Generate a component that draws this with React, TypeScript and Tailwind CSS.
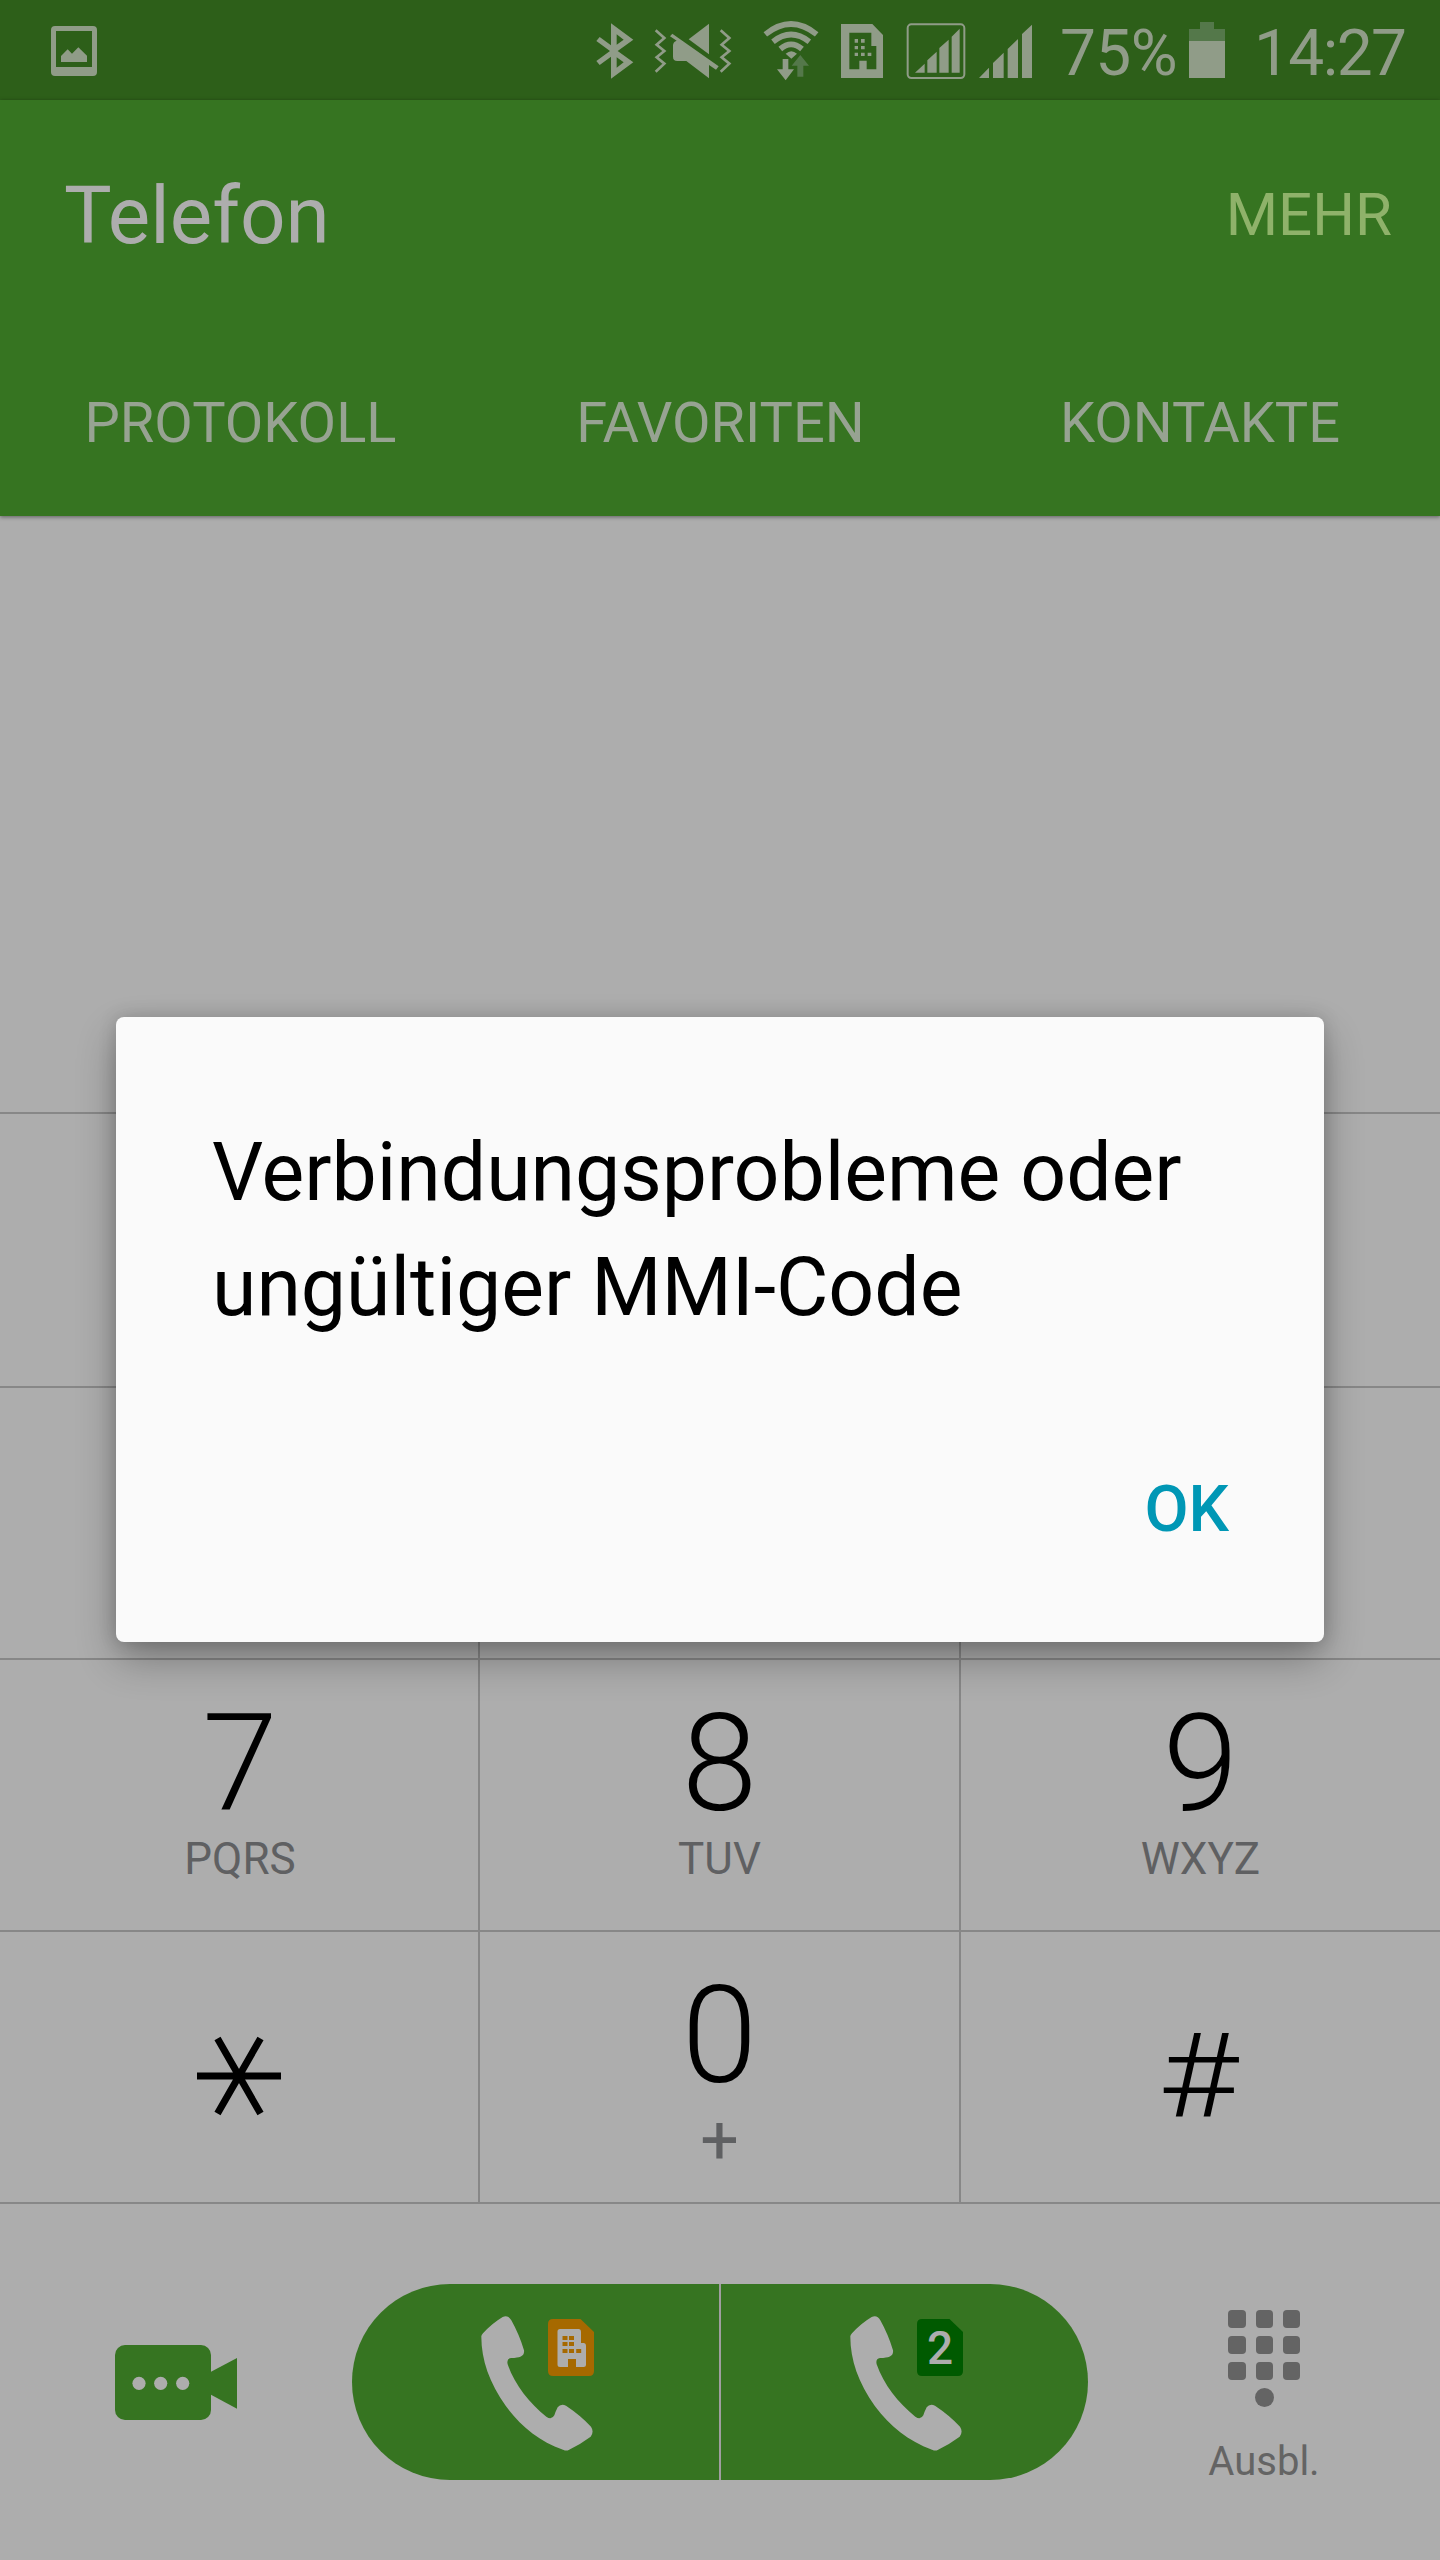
import React from "react";

const ICON = "#909c88";
const DIM = "#54784a";

function StatusBar() {
  return (
    <div className="flex h-[100px] items-start bg-[#2d5f19] text-[#909c88]">
      <svg className="ml-[51px] mt-[26px] h-[50px] w-[46px] shrink-0" viewBox="153 78 138 150" fill={ICON}>
        <path fillRule="evenodd" d="M165 78H279Q291 78 291 90V216Q291 228 279 228H165Q153 228 153 216V90Q153 78 165 78ZM168 93V201H276V93Z" />
        <path d="M183 168L203 148L216 161L235 142L261 167V186H183Z" />
      </svg>
      <svg className="ml-[499px] mt-[23px] h-[56px] w-[38px] shrink-0" viewBox="108 69 114 168">
        <path fill={ICON} fillRule="evenodd" d="M153 70L220 119L173 153L220 187L153 236V170L119 195L109 183L150 153L109 123L119 111L153 136ZM170 103V134L191 119ZM170 172V203L191 187Z" />
      </svg>
      <svg className="ml-[20px] mt-[23px] h-[56px] w-[78px] shrink-0" viewBox="282 69 234 168">
        <g fill="none" stroke={ICON} strokeWidth="8">
          <path d="M287 91L313 114L290 134L313 153L290 172L313 191L287 215" />
          <path d="M482 91L508 114L485 134L508 153L485 172L508 191L482 215" />
        </g>
        <path fill={ICON} d="M447 71V163L386 118Z" />
        <path fill={ICON} d="M337 101L476 199L468 209L447 195V235L379 183H352Q339 183 339 170V136Q339 126 350 122L330 109Z" />
      </svg>
      <svg className="ml-[31px] mt-[20px] h-[61px] w-[56px] shrink-0" viewBox="611 60 168 183">
        <g fill="none" stroke={ICON} strokeWidth="17">
          <path d="M618 103Q695 41 772 103" />
          <path d="M641 125Q695 82 750 125" />
          <path d="M663 147Q695 119 728 147" />
        </g>
        <path fill={ICON} d="M679 161Q696 146 713 161L696 176Z" />
        <path fill={ICON} d="M670 177H687V208H704L679 241L653 208H670Z" />
        <path fill={DIM} d="M723 165L749 197H732V230H714V197H697Z" />
      </svg>
      <svg className="ml-[22px] mt-[24px] h-[54px] w-[42px] shrink-0" viewBox="844 72 126 162" fill={ICON}>
        <path fillRule="evenodd" d="M844 72H938L970 105V234H844ZM869 98V208H899V182H921V208H950V138H935V98Z" />
        <path d="M885 117h10v11h-10zM904 117h11v11h-11zM885 138h10v10h-10zM904 138h11v10h-11zM885 158h10v10h-10zM904 158h11v10h-11zM924 158h11v10h-11z" />
      </svg>
      <svg className="ml-[23px] mt-[23px] h-[56px] w-[60px] shrink-0" viewBox="1039 69 180 168" fill={ICON}>
        <rect x="1044" y="73" width="170" height="161" rx="11" fill="none" stroke={ICON} strokeWidth="6" />
        <path d="M1066 218L1095 191V218ZM1103 218V181L1131 155V218ZM1139 218V144L1167 119V218ZM1176 218V110L1200 86V218Z" />
      </svg>
      <svg className="ml-[12px] mt-[24px] h-[54px] w-[55px] shrink-0" viewBox="1254 72 165 162" fill={ICON}>
        <path d="M1257 234L1287 203V234ZM1299 234V189L1331 158V234ZM1343 234V147L1374 117V234ZM1386 234V102L1416 74V234Z" />
      </svg>
      <span className="ml-[27px] mt-[14px] w-[120px] whitespace-nowrap text-[64px] leading-[80px] tracking-[-0.6px]">75%</span>
      <svg className="ml-[9px] mt-[22px] h-[56px] w-[36px] shrink-0" viewBox="0 0 36 56">
        <path fill={DIM} d="M11 0H25V7H36V19H0V7H11Z" />
        <path fill={ICON} d="M0 19H36V56H0Z" />
      </svg>
      <span className="ml-[29px] mt-[14px] whitespace-nowrap text-[64px] leading-[80px] tracking-[-1.6px]">14:27</span>
    </div>
  );
}

function Header() {
  return (
    <header className="relative h-[416px] bg-[#367421] shadow-[0_1px_4px_rgba(0,0,0,0.45)]">
      <div className="flex h-[230px] items-center justify-between pl-[64px] pr-[48px]">
        <h1 className="pt-px text-[80px] leading-[96px] text-[#adadad]">Telefon</h1>
        <button className="text-[60px] leading-[72px] text-[#8fb26a]">MEHR</button>
      </div>
      <nav className="grid h-[186px] grid-cols-3 items-center text-center text-[56px] leading-[66px] text-[#97a392]">
        <span className="pl-px">PROTOKOLL</span>
        <span className="pl-px">FAVORITEN</span>
        <span>KONTAKTE</span>
      </nav>
    </header>
  );
}

function Key({ digit, label }: { digit: string; label: string }) {
  return (
    <div className="flex flex-col items-center pt-[36px]">
      <span className="text-[136px] font-[330] leading-[136px] text-black">{digit}</span>
      <span className="mt-px text-[44px] leading-[52px] text-[#5f6062]">{label}</span>
    </div>
  );
}

function Keypad() {
  const row = "grid h-[272px] grid-cols-[480px_481px_479px] border-b-2 border-[#878787]";
  const cell = "border-r-2 border-[#878787]";
  return (
    <div>
      <div className="grid h-[276px] grid-cols-[480px_481px_479px] border-y-2 border-[#878787]">
        <div className={cell} />
        <div className={cell} />
        <div />
      </div>
      <div className={row}>
        <div className={cell} />
        <div className={cell} />
        <div />
      </div>
      <div className={row}>
        <div className={cell + " pl-[2px]"}><Key digit="7" label="PQRS" /></div>
        <div className={cell}><Key digit="8" label="TUV" /></div>
        <Key digit="9" label="WXYZ" />
      </div>
      <div className={row}>
        <div className={cell + " flex justify-center pt-[104px]"}>
          <svg className="h-[80px] w-[86px]" viewBox="-43 -40 86 80" stroke="black" strokeWidth="7">
            <path d="M-42 0H42M-21.500 -37.500L21.500 37.500M21.500 -37.500L-21.500 37.500" />
          </svg>
        </div>
        <div className={cell + " flex flex-col items-center pt-[36px]"}>
          <span className="text-[136px] font-[330] leading-[136px] text-black">0</span>
          <span className="mt-[2px] text-[68px] leading-[68px] text-[#5f6062]">+</span>
        </div>
        <div className="flex justify-center pr-[5px] pt-[86px]">
          <span className="scale-x-[1.18] text-[117px] font-light leading-[117px] text-black">#</span>
        </div>
      </div>
    </div>
  );
}

function Handset() {
  return (
    <svg className="h-[137px] w-[113px] shrink-0" viewBox="630 166 339 411" fill="#adadad">
      <path d="M631 232Q630 227 636 221Q663 191 695 172Q711 164 721 182Q745 225 759 272Q761 286 748 291Q741 294 720 295Q706 297 710 314C731 375 775 430 826 471Q842 482 850 467Q853 457 860 443Q869 431 885 438Q930 468 960 501Q970 516 959 531Q925 556 893 571Q887 575 876 570C805 545 750 500 705 440C655 370 631 300 631 232Z" />
    </svg>
  );
}

function CallBar() {
  return (
    <div className="flex items-start">
      <svg className="ml-[115px] mt-[141px] h-[76px] w-[122px] shrink-0" viewBox="0 0 122 76" fill="#367421">
        <rect width="96" height="75" rx="10" />
        <path d="M96 26.700L122 13V63.700L96 49.700Z" />
        <g fill="#adadad">
          <circle cx="24" cy="38.300" r="6.600" />
          <circle cx="45.700" cy="38.300" r="6.600" />
          <circle cx="67.700" cy="38.300" r="6.600" />
        </g>
      </svg>
      <div className="ml-[115px] mt-[80px] flex h-[196px] w-[736px] overflow-hidden rounded-full bg-[#367421]">
        <div className="flex w-[369px] items-start border-r-2 border-[#a09ea0] pl-[129px] pt-[31px]">
          <Handset />
          <svg className="-ml-[46px] mt-[4px] h-[57px] w-[46px]" viewBox="0 0 46 57">
            <path fill="#a66900" d="M5 0H32.500L46 13V52Q46 57 41 57H5Q0 57 0 52V5Q0 0 5 0Z" />
            <path
              fill="#adadad"
              fillRule="evenodd"
              d="M12 10H30.500Q33 10 33 13V24H35.500Q38 24 38 27V45.500Q38 48 35.500 48H28V40H20V48H12Q9.500 48 9.500 45.500V12.500Q9.500 10 12 10ZM14.500 17v4h5v-4zM21 17v4h5v-4zM14.500 23v4h5v-4zM21 23v4h5v-4zM14.500 30v4h5v-4zM21 30v4h5v-4zM28.200 30v4h5v-4z"
            />
          </svg>
        </div>
        <div className="flex items-start pl-[129px] pt-[31px]">
          <Handset />
          <div className="relative -ml-[46px] mt-[4px] h-[57px] w-[46px]">
            <svg className="h-[57px] w-[46px]" viewBox="0 0 46 57">
              <path fill="#005a00" d="M5 0H32.500L46 13V52Q46 57 41 57H5Q0 57 0 52V5Q0 0 5 0Z" />
            </svg>
            <span className="absolute inset-0 text-center text-[46px] font-medium leading-[58px] text-[#adadad]">2</span>
          </div>
        </div>
      </div>
      <div className="ml-[76px] mt-[106px] flex w-[200px] flex-col items-center">
        <svg className="h-[97px] w-[72px]" viewBox="0 0 72 97" fill="#646464">
          {[0, 26, 52].map((y) => (
            <g key={y}>
              <rect x="0" y={y} width="18" height="18" rx="4" />
              <rect x="28" y={y} width="17" height="18" rx="4" />
              <rect x="55" y={y} width="17" height="18" rx="4" />
            </g>
          ))}
          <circle cx="36.500" cy="87.500" r="9.500" />
        </svg>
        <span className="mt-[31px] text-[40px] leading-[48px] text-[#646464]">Ausbl.</span>
      </div>
    </div>
  );
}

function Dialog() {
  return (
    <div
      role="dialog"
      className="absolute left-[116px] top-[1017px] flex h-[625px] w-[1208px] flex-col rounded-[8px] bg-[#fafafa] pl-[96px] pr-[95px] pt-[98px] shadow-[0_18px_40px_-2px_rgba(0,0,0,0.32),0_0_18px_rgba(0,0,0,0.16)]"
    >
      <p className="origin-left scale-x-[0.982] whitespace-nowrap text-[82px] leading-[115px] text-black">
        Verbindungsprobleme oder
        <br />
        ungültiger MMI-Code
      </p>
      <button className="mt-[125px] self-end text-[64px] font-medium leading-[80px] text-[#0097b5]">OK</button>
    </div>
  );
}

export default function App() {
  return (
    <div className="relative h-[2560px] w-[1440px] overflow-hidden bg-[#adadad] font-['Roboto',sans-serif]">
      <StatusBar />
      <Header />
      <div className="h-[596px]" />
      <Keypad />
      <CallBar />
      <Dialog />
    </div>
  );
}
